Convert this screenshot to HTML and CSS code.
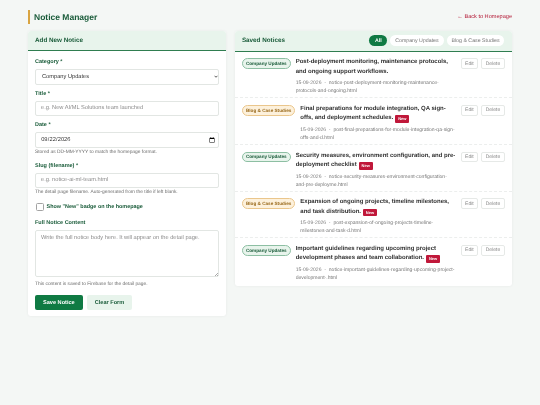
FILE: index.html
```html
<!DOCTYPE html>
<html lang="en">

<head>
    <meta charset="UTF-8">
    <meta name="viewport" content="width=device-width, initial-scale=1.0">
    <title>Notice Manager</title>
    <link rel="stylesheet" href="styles.css">
</head>

<body>
    <div class="top">
        <h1 class="page-title">Notice Manager</h1>
        <a class="back" href="#">← Back to Homepage</a>
    </div>

    <div class="cols">
        <div class="card form-card">
            <div class="card-head">
                <h2>Add New Notice</h2>
            </div>
            <form class="form">
                <label class="lbl" for="category">Category *</label>
                <div class="sel-wrap">
                    <select class="field sel" id="category">
                        <option>Company Updates</option>
                        <option>Blog &amp; Case Studies</option>
                    </select>
                    <svg class="sel-arrow" viewBox="0 0 8 5" width="4" height="3">
                        <path d="M1 1l3 3 3-3" fill="none" stroke="#333" stroke-width="1.6" />
                    </svg>
                </div>

                <label class="lbl" for="title">Title *</label>
                <input class="field" id="title" placeholder="e.g. New AI/ML Solutions team launched">

                <label class="lbl" for="date">Date *</label>
                <input class="field date" id="date" type="date" value="2026-09-22">
                <p class="hint">Stored as DD-MM-YYYY to match the homepage format.</p>

                <label class="lbl" for="slug">Slug (filename) *</label>
                <input class="field slug" id="slug" placeholder="e.g. notice-ai-ml-team.html">
                <p class="hint hint-slug">The detail page filename. Auto-generated from the title if left blank.</p>

                <label class="check">
                    <input type="checkbox">
                    <span>Show "New" badge on the homepage</span>
                </label>

                <label class="lbl" for="content">Full Notice Content</label>
                <textarea class="field area" id="content" placeholder="Write the full notice body here. It will appear on the detail page."></textarea>
                <p class="hint">This content is saved to Firebase for the detail page.</p>

                <div class="buttons">
                    <button class="btn btn-save" type="button">Save Notice</button>
                    <button class="btn btn-clear" type="button">Clear Form</button>
                </div>
            </form>
        </div>

        <div class="card list-card">
            <div class="card-head list-head">
                <h2>Saved Notices</h2>
                <div class="filters">
                    <button class="filter active">All</button>
                    <button class="filter">Company Updates</button>
                    <button class="filter">Blog &amp; Case Studies</button>
                </div>
            </div>

            <div class="item">
                <span class="pill pill-company">Company Updates</span>
                <div class="item-body">
                    <div class="item-title">Post-deployment monitoring, maintenance protocols, and ongoing support workflows.</div>
                    <div class="item-meta">15-09-2026 &nbsp;·&nbsp; notice-post-deployment-monitoring-maintenance-protocols-and-ongoing.html</div>
                </div>
                <div class="actions">
                    <button class="act">Edit</button>
                    <button class="act">Delete</button>
                </div>
            </div>

            <div class="item">
                <span class="pill pill-blog">Blog &amp; Case Studies</span>
                <div class="item-body">
                    <div class="item-title">Final preparations for module integration, QA sign-offs, and deployment schedules. <span class="new">New</span></div>
                    <div class="item-meta">15-09-2026 &nbsp;·&nbsp; post-final-preparations-for-module-integration-qa-sign-offs-and-d.html</div>
                </div>
                <div class="actions">
                    <button class="act">Edit</button>
                    <button class="act">Delete</button>
                </div>
            </div>

            <div class="item">
                <span class="pill pill-company">Company Updates</span>
                <div class="item-body">
                    <div class="item-title">Security measures, environment configuration, and pre-deployment checklist <span class="new">New</span></div>
                    <div class="item-meta">15-09-2026 &nbsp;·&nbsp; notice-security-measures-environment-configuration-and-pre-deployme.html</div>
                </div>
                <div class="actions">
                    <button class="act">Edit</button>
                    <button class="act">Delete</button>
                </div>
            </div>

            <div class="item">
                <span class="pill pill-blog">Blog &amp; Case Studies</span>
                <div class="item-body">
                    <div class="item-title">Expansion of ongoing projects, timeline milestones, and task distribution. <span class="new">New</span></div>
                    <div class="item-meta">15-09-2026 &nbsp;·&nbsp; post-expansion-of-ongoing-projects-timeline-milestones-and-task-d.html</div>
                </div>
                <div class="actions">
                    <button class="act">Edit</button>
                    <button class="act">Delete</button>
                </div>
            </div>

            <div class="item">
                <span class="pill pill-company">Company Updates</span>
                <div class="item-body">
                    <div class="item-title">Important guidelines regarding upcoming project development phases and team collaboration. <span class="new">New</span></div>
                    <div class="item-meta">15-09-2026 &nbsp;·&nbsp; notice-important-guidelines-regarding-upcoming-project-development-.html</div>
                </div>
                <div class="actions">
                    <button class="act">Edit</button>
                    <button class="act">Delete</button>
                </div>
            </div>
        </div>
    </div>
</body>

</html>
```

FILE: styles.css
```css
* {
    box-sizing: border-box;
}

body {
    margin: 0;
    padding: 10px 28px;
    min-height: 405px;
    background-color: #f4f7f5;
    font-family: "Liberation Sans", Arial, sans-serif;
    color: #333;
    text-rendering: geometricPrecision;
}

.top {
    display: flex;
    justify-content: space-between;
    align-items: center;
    height: 14px;
    margin-bottom: 7px;
    filter: blur(0.25px);
}

.page-title {
    margin: 0;
    padding-left: 4px;
    border-left: 2px solid #d9a441;
    font-size: 8.5px;
    line-height: 14px;
    color: #1a5c3a;
}

.back {
    color: #b5203c;
    font-size: 5.6px;
    text-decoration: none;
}

.cols {
    display: grid;
    grid-template-columns: 1fr 1.4fr;
    gap: 9px;
    align-items: start;
    filter: blur(0.25px);
}

.card {
    background-color: #fff;
    border-radius: 3px;
    box-shadow: 0 0 3px rgba(0, 0, 0, 0.06);
    overflow: hidden;
}

.card-head {
    display: flex;
    align-items: center;
    height: 20px;
    padding: 0 7px;
    background-color: #e8f4ec;
    border-bottom: 1px solid #2f7d50;
}

.card-head h2 {
    margin: 0;
    font-size: 6.3px;
    color: #1a5c3a;
}

.list-head {
    justify-content: space-between;
    height: 20.7px;
    padding-right: 7.5px;
}

.form {
    display: flex;
    flex-direction: column;
    padding: 8px 7px 6px;
}

.lbl {
    font-size: 5.5px;
    font-weight: bold;
    line-height: 7px;
    color: #1a5c3a;
    margin-bottom: 3px;
}

.field {
    width: 100%;
    height: 14.5px;
    margin: 0 0 6.5px;
    padding: 0 5px;
    border: 1px solid #e2e6e3;
    border-radius: 2px;
    background-color: #fff;
    font-family: inherit;
    font-size: 5.7px;
    color: #333;
    text-rendering: geometricPrecision;
}

.field::placeholder {
    color: #8b8b8b;
}

.sel-wrap {
    position: relative;
}

.sel {
    display: block;
    height: 15.5px;
    padding-left: 6px;
    appearance: none;
}

.sel-arrow {
    position: absolute;
    top: 6px;
    right: 1px;
}

.date {
    height: 16px;
    margin-bottom: 2px;
    padding-right: 3px;
}

.date::-webkit-datetime-edit-text {
    padding: 0;
}

.date::-webkit-datetime-edit-month-field,
.date::-webkit-datetime-edit-day-field,
.date::-webkit-datetime-edit-year-field {
    padding: 0 0.2px;
}

.date::-webkit-calendar-picker-indicator {
    width: 6px;
    height: 6px;
    padding: 0;
    margin: 0;
}

.slug {
    margin-bottom: 2.5px;
}

.area {
    display: block;
    height: 46.5px;
    padding: 4px 5px;
    margin-bottom: 5.8px;
}

.area::-webkit-resizer {
    background: linear-gradient(135deg, transparent 55%, #aaa 55%, #aaa 65%, transparent 65%, transparent 78%, #aaa 78%, #aaa 88%, transparent 88%) no-repeat right bottom / 4px 4px;
}

.hint {
    margin: 0 0 7px;
    font-size: 4.85px;
    line-height: 6px;
    color: #6b6b6b;
}

.hint-slug {
    margin-bottom: 6px;
}

.check {
    display: flex;
    align-items: center;
    gap: 2.5px;
    height: 10px;
    margin-bottom: 8px;
    font-size: 5.45px;
    font-weight: bold;
    color: #1a5c3a;
}

.check input {
    appearance: none;
    width: 8px;
    height: 8px;
    margin: 0 0 0 1px;
    border: 1px solid #a3a3a3;
    border-radius: 1.5px;
    background-color: #fff;
}

.buttons {
    display: flex;
    gap: 4px;
}

.btn {
    height: 15px;
    padding: 0 8px;
    border: 0;
    border-radius: 2px;
    font-family: inherit;
    font-size: 5.6px;
    font-weight: bold;
    text-rendering: geometricPrecision;
}

.btn-save {
    background-color: #0f7a43;
    color: #fff;
}

.btn-clear {
    background-color: #e8f4ec;
    color: #1a5c3a;
}

.filters {
    display: flex;
    align-items: center;
    gap: 3px;
}

.filter {
    height: 11px;
    padding: 0 4.9px;
    border: 0;
    border-radius: 6px;
    background-color: #fff;
    font-family: inherit;
    font-size: 5.25px;
    color: #777;
    text-rendering: geometricPrecision;
}

.filter.active {
    padding: 0 5.7px;
    background-color: #0f7a43;
    color: #fff;
    font-weight: bold;
}

.item {
    display: flex;
    align-items: flex-start;
    gap: 5px;
    height: 46.7px;
    padding: 6.5px 7.3px 6.5px 7px;
    border-bottom: 1px dashed #eceeed;
}

.item:last-child {
    border-bottom: 0;
    height: 48px;
}

.pill {
    flex: none;
    display: flex;
    align-items: center;
    height: 10.7px;
    padding: 0 3px;
    border: 1px solid;
    border-radius: 6px;
    font-size: 4.65px;
    font-weight: bold;
    white-space: nowrap;
}

.pill-company {
    background-color: #e8f4ec;
    border-color: #8dbfa3;
    color: #1a5c3a;
}

.pill-blog {
    background-color: #fdf1dc;
    border-color: #eac68c;
    color: #9a6a1c;
}

.item-body {
    flex: 1;
    min-width: 0;
}

.item-title {
    font-size: 6px;
    font-weight: bold;
    line-height: 9.5px;
    color: #333;
}

.item-meta {
    margin-top: 2px;
    font-size: 5.06px;
    line-height: 8px;
    color: #777;
}

.new {
    display: inline-block;
    margin: 1px 0 0 0.3px;
    padding: 0 2.9px;
    border-radius: 1px;
    background-color: #c0183a;
    color: #fff;
    font-size: 4px;
    line-height: 7.7px;
    vertical-align: top;
}

.actions {
    flex: none;
    display: flex;
    gap: 3px;
}

.act {
    height: 10.7px;
    padding: 0 3.5px;
    border: 1px solid #e6e9e7;
    border-radius: 2px;
    background-color: #fff;
    font-family: inherit;
    font-size: 5px;
    color: #888;
    text-rendering: geometricPrecision;
}
```
